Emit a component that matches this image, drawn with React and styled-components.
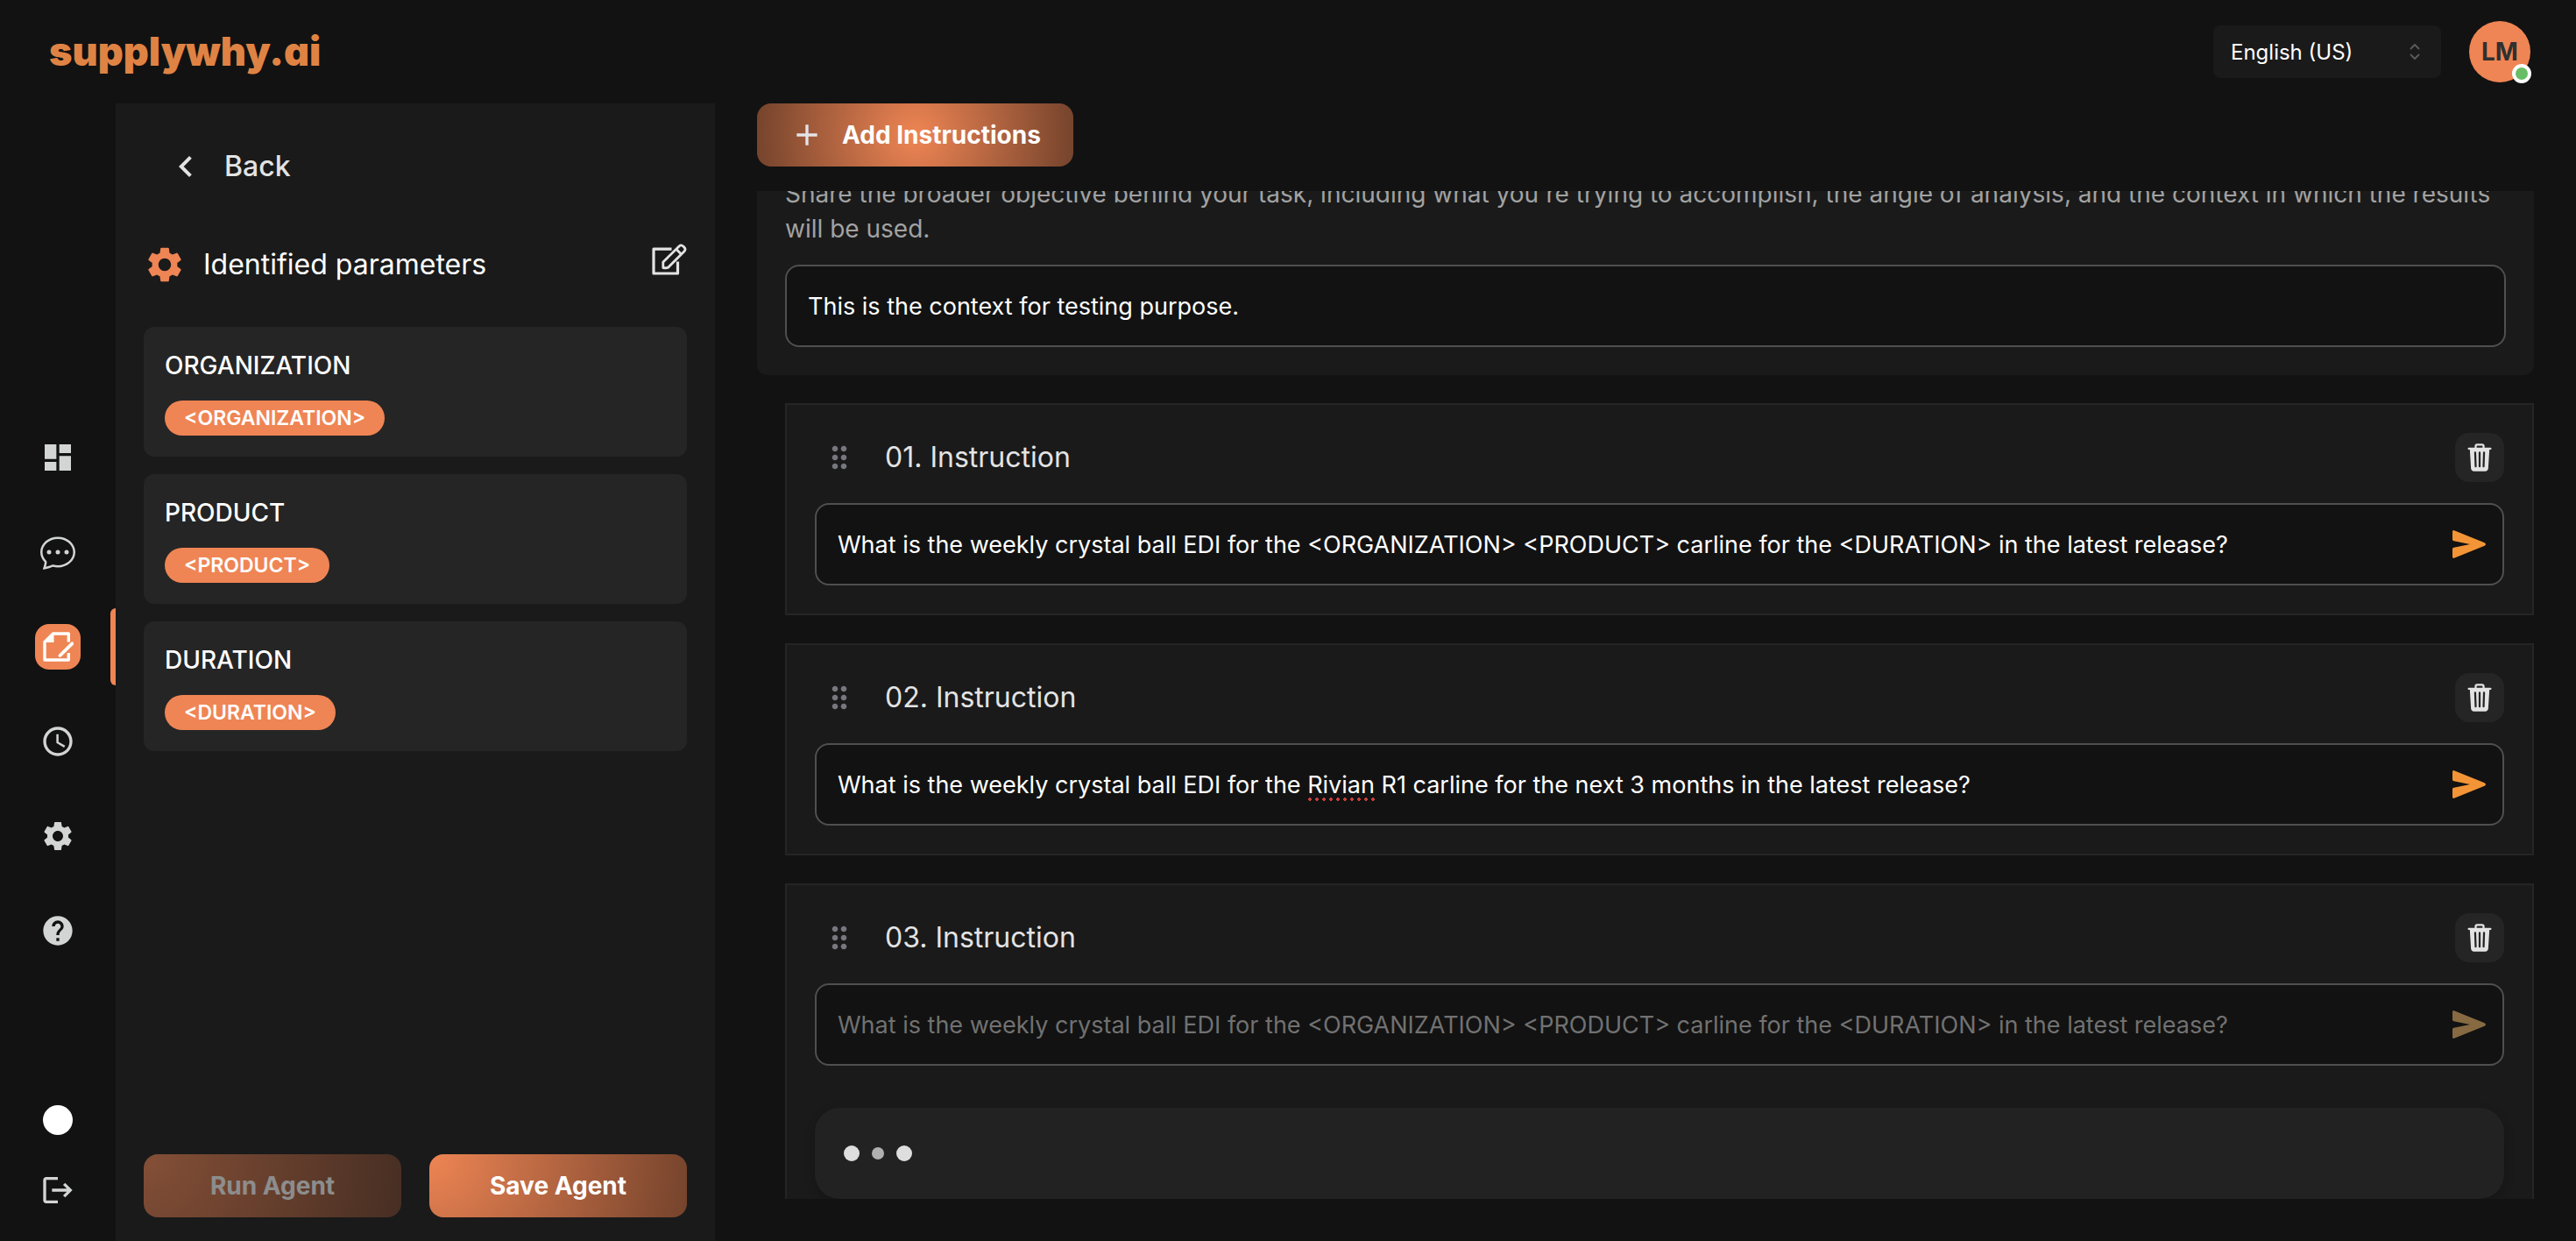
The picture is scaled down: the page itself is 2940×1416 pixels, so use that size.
import React, { useLayoutEffect, useRef, useState } from "react";
import styled, { createGlobalStyle } from "styled-components";
import {
  MdAccessTime,
  MdAdd,
  MdChevronLeft,
  MdDashboard,
  MdDragIndicator,
  MdHelp,
  MdLogout,
  MdSettings,
} from "react-icons/md";
import { BsChatDots } from "react-icons/bs";
import { IoTrash } from "react-icons/io5";

const c = {
  page: "#121212",
  panel: "#1a1a1a",
  card: "#252525",
  line: "#4f4f4f",
  text: "#ffffff",
  soft: "#e3e3e3",
  muted: "#a2a2a2",
  accent: "#ef8554",
  accentDark: "#74432c",
};

const GlobalStyle = createGlobalStyle`
  *, *::before, *::after { box-sizing: border-box; }
  body {
    margin: 0;
    background: ${c.page};
    color: ${c.text};
    font-family: Inter, "Liberation Sans", sans-serif;
  }
  button, input, select { font-family: inherit; }
  button { border: 0; padding: 0; background: none; color: inherit; cursor: pointer; }
  svg { display: block; flex-shrink: 0; }
`;

const Shell = styled.div`
  display: flex;
  flex-direction: column;
  height: 100vh;
`;

const Header = styled.header`
  display: flex;
  align-items: center;
  justify-content: space-between;
  height: 118px;
  flex-shrink: 0;
  padding: 0 52px 0 56px;
`;

const Logo = styled.a`
  color: #df8344;
  font-size: 45px;
  line-height: 64px;
  font-weight: 900;
  font-feature-settings: "cv11";
  text-decoration: none;
`;

const HeaderTools = styled.div`
  display: flex;
  align-items: center;
  gap: 32px;
`;

const SelectWrap = styled.label`
  position: relative;
  display: block;

  svg {
    position: absolute;
    right: 24px;
    top: 20px;
    pointer-events: none;
  }
`;

const LanguageSelect = styled.select`
  appearance: none;
  width: 260px;
  height: 60px;
  padding: 0 48px 0 20px;
  border: 0;
  border-radius: 8px;
  background: ${c.panel};
  color: ${c.text};
  font-size: 24px;
`;

const Avatar = styled.button`
  position: relative;
  width: 70px;
  height: 70px;
  border-radius: 50%;
  background: ${c.accent};
  color: #303030;
  font-size: 28px;
  font-weight: 700;
`;

const StatusDot = styled.span`
  position: absolute;
  right: -1px;
  bottom: -1px;
  width: 22px;
  height: 22px;
  border: 4px solid #ffffff;
  border-radius: 50%;
  background: #68bd66;
`;

const Body = styled.div`
  display: flex;
  flex: 1;
  min-height: 0;
`;

const Rail = styled.aside`
  display: flex;
  flex-direction: column;
  justify-content: space-between;
  width: 132px;
  flex-shrink: 0;
  padding: 378px 0 32px;
  color: #d3d5d4;
`;

const RailGroup = styled.nav`
  display: flex;
  flex-direction: column;
  gap: ${(p) => p.$gap}px;
`;

const RailItem = styled.div`
  position: relative;
  display: flex;
  justify-content: center;
`;

const RailButton = styled.button`
  display: flex;
  align-items: center;
  justify-content: center;
  width: 52px;
  height: 52px;
  border-radius: 16px;
  background: ${(p) => (p.$active ? c.accent : "transparent")};
  color: ${(p) => (p.$active ? "#ffffff" : "inherit")};
`;

const ActiveBar = styled.span`
  position: absolute;
  right: 0;
  top: -18px;
  width: 6px;
  height: 88px;
  border-radius: 6px 0 0 6px;
  background: ${c.accent};
`;

const ThemeDot = styled.span`
  width: 34px;
  height: 34px;
  border-radius: 50%;
  background: #ffffff;
`;

const ParameterPanel = styled.section`
  display: flex;
  flex-direction: column;
  width: 684px;
  flex-shrink: 0;
  padding: 48px 32px 27px;
  background: ${c.panel};
`;

const BackButton = styled.button`
  display: flex;
  align-items: center;
  align-self: flex-start;
  gap: 20px;
  margin-left: 24px;
  color: ${c.soft};
  font-size: 32px;
  line-height: 48px;
  font-weight: 500;
`;

const PanelHeading = styled.div`
  display: flex;
  align-items: center;
  gap: 20px;
  margin: 64px 0 47px;
`;

const PanelTitle = styled.h2`
  flex: 1;
  margin: 0;
  font-size: 32px;
  line-height: 48px;
  font-weight: 400;
`;

const EditButton = styled.button`
  display: flex;
  align-self: flex-start;
  color: ${c.soft};
`;

const ParameterList = styled.ul`
  display: flex;
  flex-direction: column;
  gap: 20px;
  flex: 1;
  margin: 0;
  padding: 0;
  list-style: none;
`;

const ParameterCard = styled.li`
  display: flex;
  flex-direction: column;
  align-items: flex-start;
  gap: 20px;
  padding: 24px;
  border-radius: 12px;
  background: ${c.card};
`;

const ParameterName = styled.h3`
  margin: 0;
  font-size: 28px;
  line-height: 40px;
  font-weight: 500;
`;

const Chip = styled.span`
  padding: 0 22px;
  border-radius: 20px;
  background: ${c.accent};
  font-size: 23px;
  line-height: 40px;
  font-weight: 600;
`;

const ActionRow = styled.div`
  display: grid;
  grid-template-columns: 1fr 1fr;
  gap: 32px;
`;

const GradientButton = styled.button`
  display: flex;
  align-items: center;
  justify-content: center;
  gap: 20px;
  height: 72px;
  padding: 0 37px;
  border-radius: 16px;
  background: radial-gradient(
    circle at ${(p) => p.$origin},
    ${c.accent},
    ${c.accentDark}
  );
  color: #ffffff;
  font-size: 28px;
  font-weight: 700;
  opacity: ${(p) => (p.disabled ? 0.5 : 1)};
`;

const Main = styled.main`
  display: flex;
  flex-direction: column;
  align-items: stretch;
  flex: 1;
  min-width: 0;
  gap: 28px;
  padding: 0 48px 48px;
`;

const Toolbar = styled.div`
  display: flex;
`;

const Scroller = styled.div`
  flex: 1;
  min-height: 0;
  overflow: hidden;
`;

const ContextCard = styled.section`
  margin-top: -49px;
  padding: 32px;
  border-radius: 12px;
  background: ${c.panel};
`;

const ContextLabel = styled.label`
  display: block;
  margin-bottom: 21px;
  color: ${c.muted};
  font-size: 28px;
  line-height: 40px;
`;

const InstructionList = styled.ol`
  display: flex;
  flex-direction: column;
  gap: 32px;
  margin: 32px 0 0 32px;
  padding: 0;
  list-style: none;
`;

const InstructionCard = styled.li`
  padding: 32px;
  border: 2px solid ${c.card};
  background: ${c.panel};
`;

const InstructionHeader = styled.div`
  display: flex;
  align-items: center;
  gap: 32px;
  margin-bottom: 24px;
  padding-left: 8px;
  color: #77777f;
`;

const InstructionTitle = styled.label`
  flex: 1;
  color: ${c.soft};
  font-size: 32px;
  line-height: 48px;
`;

const DeleteButton = styled.button`
  display: flex;
  align-items: center;
  justify-content: center;
  width: 56px;
  height: 56px;
  border-radius: 16px;
  background: ${c.card};
  color: ${c.soft};
`;

const Field = styled.div`
  position: relative;
  display: flex;
  align-items: center;
  gap: 20px;
  padding-right: 19px;
  border: 2px solid ${c.line};
  border-radius: 16px;
  background: ${c.page};
`;

const TextInput = styled.input`
  flex: 1;
  min-width: 0;
  height: 90px;
  padding: 0 0 0 24px;
  border: 0;
  outline: 0;
  background: transparent;
  color: ${c.text};
  font-size: 27px;

  &:disabled {
    color: #717171;
  }
`;

const SendButton = styled.button`
  display: flex;
  color: #f39537;

  &:disabled {
    color: #876a42;
  }
`;

const SpellMark = styled.span`
  position: absolute;
  top: 60px;
  height: 4px;
  background: radial-gradient(circle at 3px 2px, #c8403c 2px, transparent 2px) 0 0 / 8px 4px;
  pointer-events: none;
`;

const Typing = styled.div`
  display: flex;
  align-items: center;
  gap: 12px;
  height: 104px;
  margin-top: 48px;
  padding-left: 33px;
  border-radius: 28px;
  background: #222222;
  box-shadow: 0 4px 12px rgba(0, 0, 0, 0.2);
`;

const TypingDot = styled.span`
  width: 18px;
  height: 18px;
  border: ${(p) => (p.$small ? 2 : 0)}px solid transparent;
  border-radius: 50%;
  background: ${(p) => (p.$small ? "#b0b0b0" : "#dedede")};
  background-clip: padding-box;
`;

function SelectArrows() {
  return (
    <svg width="12" height="20" viewBox="0 0 12 20" fill="none" stroke="#5c5c5c" strokeWidth="1.8" strokeLinecap="round" strokeLinejoin="round">
      <path d="M1.5 6.5 6 2l4.500 4.500M1.500 13.500 6 18l4.500-4.500" />
    </svg>
  );
}

function NoteIcon() {
  return (
    <svg width="36" height="36" viewBox="0 0 36 36" fill="none" stroke="currentColor" strokeWidth="3.400">
      <path d="M30.300 12.500V3H12.500L3 12.500V33H30.300V25" strokeLinejoin="round" />
      <path d="M13.500 3V13H3Z" fill="currentColor" stroke="none" />
      <path d="M20.500 28 34.300 14.300" strokeWidth="3.800" strokeLinecap="round" />
    </svg>
  );
}

function EditIcon() {
  return (
    <svg width="40" height="36" viewBox="0 0 40 36" fill="none" stroke="currentColor" strokeWidth="3.200" strokeLinejoin="round">
      <path d="M22.500 6.200H2V34H29.500V20.500" />
      <path d="M12.800 27.500V21L31.300 2.800Q33.500.8 36 3.200L37 4.300Q39 6.500 37 8.800L18.800 27Q17 28.200 12.800 27.500Z" strokeWidth="2.800" />
      <path d="M28 6.500 33.500 12" strokeWidth="2.800" />
    </svg>
  );
}

function SendIcon() {
  return (
    <svg width="38" height="32" viewBox="0 0 38 32" fill="currentColor">
      <path d="M0 1.800Q0-.6 2.600.4L36.600 14.200Q39.400 16 36.600 17.800L2.600 31.600Q0 32.600 0 30.200V21.500Q0 20 1.600 19.700L20 16 1.600 12.300Q0 12 0 10.500Z" />
    </svg>
  );
}

const navItems = [
  { label: "Dashboard", icon: <MdDashboard size={40} /> },
  { label: "Chat", icon: <BsChatDots size={40} /> },
  { label: "Agents", icon: <NoteIcon />, active: true },
  { label: "History", icon: <MdAccessTime size={40} /> },
  { label: "Settings", icon: <MdSettings size={40} /> },
  { label: "Help", icon: <MdHelp size={40} /> },
];

const parameters = ["ORGANIZATION", "PRODUCT", "DURATION"];

const template =
  "What is the weekly crystal ball EDI for the <ORGANIZATION> <PRODUCT> carline for the <DURATION> in the latest release?";

const instructions = [
  { text: template },
  {
    text: "What is the weekly crystal ball EDI for the Rivian R1 carline for the next 3 months in the latest release?",
    misspelled: "Rivian",
  },
  { text: template, busy: true },
];

function InstructionField({ id, item }) {
  const inputRef = useRef(null);
  const [mark, setMark] = useState(null);

  // Finds where the flagged word sits inside the input's text.
  useLayoutEffect(() => {
    if (!item.misspelled) return;
    const style = getComputedStyle(inputRef.current);
    const ctx = document.createElement("canvas").getContext("2d");
    ctx.font = `${style.fontWeight} ${style.fontSize} ${style.fontFamily}`;
    const before = item.text.slice(0, item.text.indexOf(item.misspelled));
    setMark({
      left: Math.round(parseFloat(style.paddingLeft) + ctx.measureText(before).width),
      width: Math.round(ctx.measureText(item.misspelled).width),
    });
  }, [item]);

  return (
    <Field>
      <TextInput ref={inputRef} id={id} defaultValue={item.text} disabled={item.busy} spellCheck={false} />
      {mark && <SpellMark style={mark} />}
      <SendButton type="button" aria-label="Send" disabled={item.busy}>
        <SendIcon />
      </SendButton>
    </Field>
  );
}

export default function App() {
  return (
    <Shell>
      <GlobalStyle />
      <Header>
        <Logo href="#">supplywhy.ai</Logo>
        <HeaderTools>
          <SelectWrap>
            <LanguageSelect aria-label="Language" defaultValue="en">
              <option value="en">English (US)</option>
            </LanguageSelect>
            <SelectArrows />
          </SelectWrap>
          <Avatar type="button">
            LM
            <StatusDot />
          </Avatar>
        </HeaderTools>
      </Header>
      <Body>
        <Rail>
          <RailGroup $gap={56}>
            {navItems.map((n) => (
              <RailItem key={n.label}>
                <RailButton type="button" aria-label={n.label} $active={n.active}>
                  {n.icon}
                </RailButton>
                {n.active && <ActiveBar />}
              </RailItem>
            ))}
          </RailGroup>
          <RailGroup $gap={28}>
            <RailItem>
              <RailButton type="button" aria-label="Theme">
                <ThemeDot />
              </RailButton>
            </RailItem>
            <RailItem>
              <RailButton type="button" aria-label="Log out">
                <MdLogout size={40} />
              </RailButton>
            </RailItem>
          </RailGroup>
        </Rail>
        <ParameterPanel>
          <BackButton type="button">
            <MdChevronLeft size={48} />
            Back
          </BackButton>
          <PanelHeading>
            <MdSettings size={48} color={c.accent} />
            <PanelTitle>Identified parameters</PanelTitle>
            <EditButton type="button" aria-label="Edit parameters">
              <EditIcon />
            </EditButton>
          </PanelHeading>
          <ParameterList>
            {parameters.map((p) => (
              <ParameterCard key={p}>
                <ParameterName>{p}</ParameterName>
                <Chip>{`<${p}>`}</Chip>
              </ParameterCard>
            ))}
          </ParameterList>
          <ActionRow>
            <GradientButton type="button" $origin="0 0" disabled>
              Run Agent
            </GradientButton>
            <GradientButton type="button" $origin="0 0">
              Save Agent
            </GradientButton>
          </ActionRow>
        </ParameterPanel>
        <Main>
          <Toolbar>
            <GradientButton type="button" $origin="center">
              <MdAdd size={40} color="#e3e3e8" />
              Add Instructions
            </GradientButton>
          </Toolbar>
          <Scroller>
            <ContextCard>
              <ContextLabel htmlFor="context">
                Share the broader objective behind your task, including what you're trying to accomplish, the angle of
                analysis, and the context in which the results will be used.
              </ContextLabel>
              <Field>
                <TextInput id="context" defaultValue="This is the context for testing purpose." />
              </Field>
            </ContextCard>
            <InstructionList>
              {instructions.map((item, i) => (
                <InstructionCard key={i}>
                  <InstructionHeader>
                    <MdDragIndicator size={40} />
                    <InstructionTitle htmlFor={`instruction-${i}`}>{`0${i + 1}. Instruction`}</InstructionTitle>
                    <DeleteButton type="button" aria-label="Delete instruction">
                      <IoTrash size={36} />
                    </DeleteButton>
                  </InstructionHeader>
                  <InstructionField id={`instruction-${i}`} item={item} />
                  {item.busy && (
                    <Typing>
                      <TypingDot />
                      <TypingDot $small />
                      <TypingDot />
                    </Typing>
                  )}
                </InstructionCard>
              ))}
            </InstructionList>
          </Scroller>
        </Main>
      </Body>
    </Shell>
  );
}
